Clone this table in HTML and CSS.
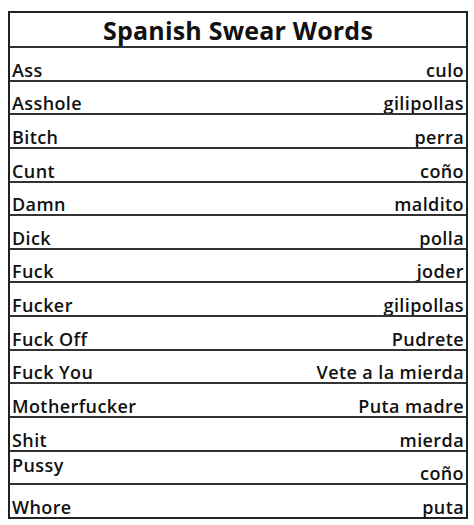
FILE: index.html
```html
<!DOCTYPE html>
<html>
<head>
<meta charset="utf-8">
<link rel="stylesheet" href="styles.css">
</head>
<body>
<div class="sheet">
  <div class="title">Spanish Swear Words</div>
  <div class="row"><span>Ass</span><span>culo</span></div>
  <div class="row"><span>Asshole</span><span>gilipollas</span></div>
  <div class="row"><span>Bitch</span><span>perra</span></div>
  <div class="row"><span>Cunt</span><span>coño</span></div>
  <div class="row"><span>Damn</span><span>maldito</span></div>
  <div class="row"><span>Dick</span><span>polla</span></div>
  <div class="row"><span>Fuck</span><span>joder</span></div>
  <div class="row"><span>Fucker</span><span>gilipollas</span></div>
  <div class="row"><span>Fuck Off</span><span>Pudrete</span></div>
  <div class="row"><span>Fuck You</span><span>Vete a la mierda</span></div>
  <div class="row"><span>Motherfucker</span><span>Puta madre</span></div>
  <div class="row"><span>Shit</span><span>mierda</span></div>
  <div class="row"><span class="raised">Pussy</span><span>coño</span></div>
  <div class="row"><span>Whore</span><span>puta</span></div>
</div>
</body>
</html>
```
FILE: styles.css
```css
html, body {
  margin: 0;
  padding: 0;
  background: #ffffff;
}
body {
  padding: 11px 6px 0 8px;
  font-family: "Open Sans", "DejaVu Sans", sans-serif;
  color: #111;
}
.sheet {
  width: 460px;
  border: 2px solid #222;
  box-sizing: border-box;
  display: flex;
  flex-direction: column;
}
.title {
  height: 33px;
  display: flex;
  align-items: center;
  justify-content: center;
  font-size: 25px;
  font-weight: 700;
  letter-spacing: 0.2px;
  padding-top: 1px;
  box-sizing: border-box;
}
.row {
  height: 33.64px;
  box-sizing: border-box;
  border-top: 2px solid #333;
  display: flex;
  justify-content: space-between;
  align-items: flex-end;
  padding: 0 2px 1px 2px;
  font-size: 18px;
  font-weight: 600;
  letter-spacing: 0.4px;
  line-height: 18px;
}
.raised {
  align-self: center;
  margin-bottom: 4px;
}
```
